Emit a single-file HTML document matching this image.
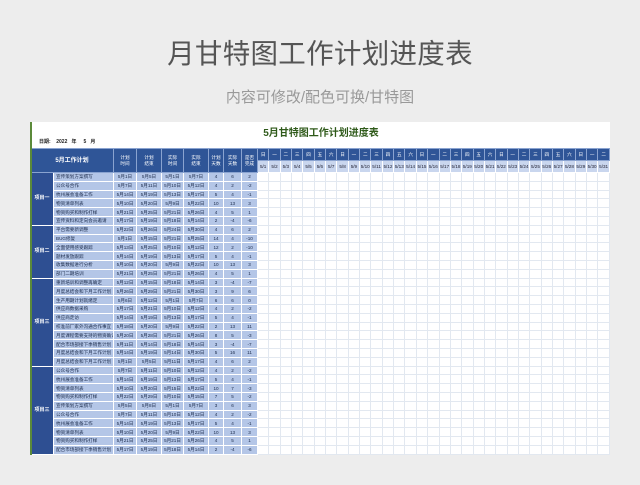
<!DOCTYPE html>
<html><head><meta charset="utf-8"><style>
body{margin:0;width:640px;height:485px;background:#ededed;font-family:"Liberation Sans","Noto Sans CJK SC",sans-serif;position:relative;overflow:hidden}
.t1{position:absolute;top:36px;left:0;width:640px;text-align:center;font-size:27.5px;color:#555;letter-spacing:0.3px;line-height:36px}
.t2{position:absolute;top:88px;left:0;width:640px;text-align:center;font-size:15px;color:#999;line-height:20px}
.sheet{position:absolute;left:30px;top:122px;width:580px;height:333px;background:#fff;border-left:2px solid #5b8a3a;box-sizing:border-box;overflow:hidden}
.st{position:absolute;left:0;top:2px;width:100%;text-align:center;font-size:10px;font-weight:bold;color:#2f5a1a}
.dt{position:absolute;left:7px;top:16px;font-size:5px;font-weight:bold;color:#222}
table{position:absolute;left:-2px;top:26px;width:580px;border-collapse:collapse;table-layout:fixed}
td{font-size:4.6px;text-align:center;padding:0;overflow:hidden;white-space:nowrap;line-height:5px}
tr.d{height:8.8px}
tr.d td{height:7.6px;max-height:8.8px;background:#b4c6e7;border:0.6px solid #fff;color:#1a2a4a}
tr.d td.g{background:#fff;border:0.5px solid #e2e8f0}
td.tk{text-align:left;padding-left:2px}
td.p{background:#2e4f92!important;color:#fff!important;font-weight:bold;font-size:5px}
tr.h1 td{height:11px;background:#2f5597;color:#fff;border:0.6px solid #8aa3d0;line-height:6px}
tr.h2 td{height:11px;background:#c9d6ee;color:#223;border:0.6px solid #fff}
</style></head><body>
<div class="t1">月甘特图工作计划进度表</div>
<div class="t2">内容可修改/配色可换/甘特图</div>
<div class="sheet">
<div class="st">5月甘特图工作计划进度表</div>
<div class="dt">日期:&nbsp;&nbsp;&nbsp; 2022 &nbsp;&nbsp;年 &nbsp;&nbsp;&nbsp;&nbsp;5 &nbsp;&nbsp;月</div>
<table id="tb">
<colgroup><col style="width:23px"><col style="width:60px"><col style="width:23px"><col style="width:25px"><col style="width:22px"><col style="width:25px"><col style="width:15px"><col style="width:18px"><col style="width:16px">
<col><col><col><col><col><col><col><col><col><col><col><col><col><col><col><col><col><col><col><col><col><col><col><col><col><col><col><col><col><col><col></colgroup>
<tr class="h1"><td colspan="2" rowspan="2" style="font-size:6px;font-weight:bold;background:#2f5597;color:#fff">5月工作计划</td><td rowspan="2" style="background:#2f5597;color:#fff">计划<br>时间</td><td rowspan="2" style="background:#2f5597;color:#fff">计划<br>结束</td><td rowspan="2" style="background:#2f5597;color:#fff">实际<br>时间</td><td rowspan="2" style="background:#2f5597;color:#fff">实际<br>结束</td><td rowspan="2" style="background:#2f5597;color:#fff">计划<br>天数</td><td rowspan="2" style="background:#2f5597;color:#fff">实际<br>天数</td><td rowspan="2" style="background:#2f5597;color:#fff">是否<br>完成</td>
<td>日</td><td>一</td><td>二</td><td>三</td><td>四</td><td>五</td><td>六</td><td>日</td><td>一</td><td>二</td><td>三</td><td>四</td><td>五</td><td>六</td><td>日</td><td>一</td><td>二</td><td>三</td><td>四</td><td>五</td><td>六</td><td>日</td><td>一</td><td>二</td><td>三</td><td>四</td><td>五</td><td>六</td><td>日</td><td>一</td><td>二</td></tr>
<tr class="h2"><td>5/1</td><td>5/2</td><td>5/3</td><td>5/4</td><td>5/5</td><td>5/6</td><td>5/7</td><td>5/8</td><td>5/9</td><td>5/10</td><td>5/11</td><td>5/12</td><td>5/13</td><td>5/14</td><td>5/15</td><td>5/16</td><td>5/17</td><td>5/18</td><td>5/19</td><td>5/20</td><td>5/21</td><td>5/22</td><td>5/23</td><td>5/24</td><td>5/25</td><td>5/26</td><td>5/27</td><td>5/28</td><td>5/29</td><td>5/30</td><td>5/31</td></tr>
</table>
</div>
<script>
var G='<td class="g"></td>'.repeat(31);
var groups=[["项目一",[
["宣传策划方案撰写","5月1日","5月5日","5月1日","5月7日",4,6,2],
["公众号合作","5月7日","5月11日","5月10日","5月12日",4,2,-2],
["杭州展会准备工作","5月14日","5月19日","5月13日","5月17日",5,4,-1],
["物资清单列表","5月10日","5月20日","5月9日","5月22日",10,13,3],
["物资购买和制作打样","5月21日","5月25日","5月21日","5月26日",4,5,1],
["宣传资料和定向会员邀请","5月17日","5月19日","5月18日","5月14日",2,-4,-6]]],
["项目二",[
["平台需要新调整","5月22日","5月26日","5月24日","5月30日",4,6,2],
["BUG修复","5月1日","5月15日","5月21日","5月25日",14,4,-10],
["全面使用感受跟踪","5月13日","5月25日","5月10日","5月12日",12,2,-10],
["题材发放跟踪","5月14日","5月19日","5月13日","5月17日",5,4,-1],
["收集数据进行分析","5月10日","5月20日","5月9日","5月22日",10,13,3],
["部门二期培训","5月21日","5月25日","5月21日","5月26日",4,5,1]]],
["项目三",[
["重新培训和调整再确定","5月12日","5月15日","5月18日","5月14日",3,-4,-7],
["月度总结会和下月工作计划","5月26日","5月29日","5月21日","5月30日",3,9,6],
["生产用期计划就绪定","5月6日","5月12日","5月1日","5月7日",6,6,0],
["供应商数据采购","5月17日","5月21日","5月10日","5月12日",4,2,-2],
["供应商走访","5月14日","5月19日","5月13日","5月17日",5,4,-1],
["校准前厂家外沟通合作事宜","5月18日","5月20日","5月9日","5月22日",2,13,11],
["月度课程需要支持的物资确认","5月20日","5月28日","5月21日","5月26日",8,5,-3],
["配合市场部接下季销售计划","5月11日","5月14日","5月18日","5月14日",3,-4,-7],
["月度总结会和下月工作计划","5月14日","5月19日","5月14日","5月30日",5,16,11],
["月度总结会和下月工作计划","5月1日","5月5日","5月11日","5月17日",4,6,2]]],
["项目三",[
["公众号合作","5月7日","5月11日","5月10日","5月12日",4,2,-2],
["杭州展会准备工作","5月14日","5月19日","5月13日","5月17日",5,4,-1],
["物资清单列表","5月10日","5月20日","5月15日","5月22日",10,7,-3],
["物资购买和制作打样","5月22日","5月29日","5月10日","5月15日",7,5,-2],
["宣传策划方案撰写","5月5日","5月8日","5月1日","5月7日",3,6,3],
["公众号合作","5月7日","5月11日","5月10日","5月12日",4,2,-2],
["杭州展会准备工作","5月14日","5月19日","5月13日","5月17日",5,4,-1],
["物资清单列表","5月10日","5月20日","5月9日","5月22日",10,13,3],
["物资购买和制作打样","5月21日","5月25日","5月21日","5月26日",4,5,1],
["配合市场部接下季销售计划","5月17日","5月19日","5月18日","5月14日",2,-4,-6]]]];
var h='';
groups.forEach(function(g){g[1].forEach(function(r,i){h+='<tr class="d">'+(i==0?'<td class="p" rowspan="'+g[1].length+'">'+g[0]+'</td>':'')+'<td class="tk">'+r[0]+'</td>';for(var k=1;k<8;k++)h+='<td>'+r[k]+'</td>';h+=G+'</tr>';});});
document.getElementById('tb').insertAdjacentHTML('beforeend',h);
</script>
</body></html>
